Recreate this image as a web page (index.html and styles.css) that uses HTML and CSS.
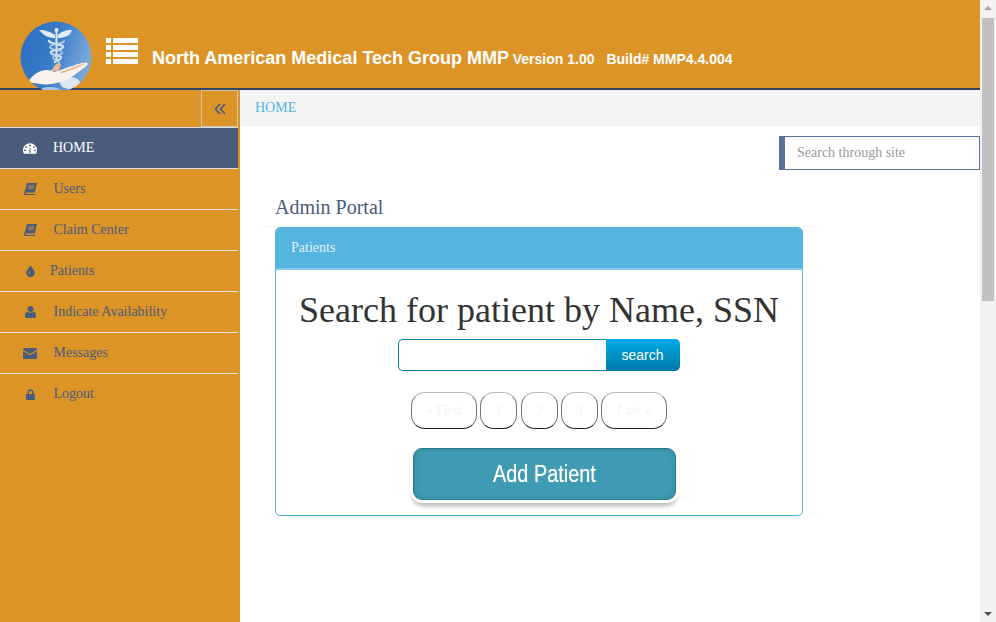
FILE: index.html
```html
<!DOCTYPE html>
<html lang="en">
<head>
<meta charset="utf-8">
<title>North American Medical Tech Group MMP</title>
<link rel="stylesheet" href="styles.css">
</head>
<body>
<div class="viewport">
  <div class="page">
    <header class="topbar">
      <svg class="logo" viewBox="0 0 72 72" aria-hidden="true">
        <defs>
          <linearGradient id="sky" x1="0" y1="0" x2="1" y2="0.3">
            <stop offset="0" stop-color="#2b6cc0"/>
            <stop offset="0.55" stop-color="#3a7cc8"/>
            <stop offset="1" stop-color="#7ba9da"/>
          </linearGradient>
          <clipPath id="disc"><circle cx="36" cy="36" r="35.5"/></clipPath>
        </defs>
        <g clip-path="url(#disc)">
          <g class="logo-art">
            <rect x="-2" y="-2" width="76" height="76" fill="url(#sky)"/>
            <path d="M19 9 C26 9 31 11 35 14 L35 17 C30 17 25 15 23 13 Z M52 9 C45 9 41 11 38 14 L38 17 C43 17 48 15 50 13 Z" fill="#e2ecf6"/>
            <circle cx="36.500" cy="9" r="2" fill="#e2ecf6"/>
            <rect x="35.500" y="10" width="2" height="31" fill="#dfe9f4"/>
            <path d="M29 19 C27 23 44 23 43 26 C42 30 30 28 31 32 C32 35 42 34 41 37 C40 40 34 39 35 42" fill="none" stroke="#d5e3f1" stroke-width="2.200"/>
            <path d="M44 19 C46 23 29 23 30 26 C31 30 43 28 42 32 C41 35 32 34 33 37 C34 40 40 39 39 42" fill="none" stroke="#bcd2e9" stroke-width="1.500"/>
            <ellipse cx="50" cy="62" rx="10" ry="6" fill="#dbe8f4"/>
            <ellipse cx="30" cy="69" rx="10" ry="3" fill="#a9c8e8"/>
            <path d="M8 61 C12 54 19 49 27 49 C30 49 33 50 34 51 C42 49 55 43 65 41.500 C68.500 41 68.500 44 65 46 C58 51 52 57 44 60 C35 63 27 64 20 63 C16 62 11 62 8 61 Z" fill="#f9f1ec"/>
            <path d="M31 50 C33 47 36 42 39 42 C42 42 41 46 38 50 Z" fill="#eab79c"/>
            <path d="M40 51 C47 48.500 56 45 66 42 C60 46 50 50 41 52.500 Z" fill="#e8b79e"/>
          </g>
        </g>
      </svg>
      <svg class="list-icon" viewBox="0 0 32 26" aria-hidden="true">
        <path d="M0 0h5v5H0zM7 0h25v5H7zM0 7h5v5H0zM7 7h25v5H7zM0 14h5v5H0zM7 14h25v5H7zM0 21h5v5H0zM7 21h25v5H7z" fill="#fff"/>
      </svg>
      <h1 class="brand">North American Medical Tech Group MMP <small class="version">Version 1.00</small><small class="build">Build# MMP4.4.004</small></h1>
    </header>
    <div class="columns">
      <aside class="sidebar">
        <div class="toggle-row">
          <button class="toggle" type="button" aria-label="Collapse menu">
            <svg viewBox="0 0 12 12" aria-hidden="true"><path d="M6 1 1.500 6 6 11M11 1 6.500 6 11 11" fill="none" stroke="#4a5b7b" stroke-width="1.700"/></svg>
          </button>
        </div>
        <nav class="menu">
          <a class="item active" href="#">
            <svg class="ico ico-gauge" viewBox="0 0 16 12"><path d="M8 0a8 8 0 0 0-8 8c0 1.500.4 2.900 1.100 4h13.800A8 8 0 0 0 16 8a8 8 0 0 0-8-8ZM8 1.500a1.100 1.100 0 1 1 0 2.200 1.100 1.100 0 0 1 0-2.200ZM3.600 3.300a1.100 1.100 0 1 1 0 2.200 1.100 1.100 0 0 1 0-2.200ZM12.400 3.300a1.100 1.100 0 1 1 0 2.200 1.100 1.100 0 0 1 0-2.200ZM2.200 7a1.100 1.100 0 1 1 0 2.200 1.100 1.100 0 0 1 0-2.200ZM13.800 7a1.100 1.100 0 1 1 0 2.200 1.100 1.100 0 0 1 0-2.200ZM7.300 11 7.500 5h1l.2 6Z" fill="#fff" fill-rule="evenodd"/></svg>
            <span>HOME</span>
          </a>
          <a class="item" href="#">
            <svg class="ico ico-book" viewBox="0 0 13 12.500"><path d="M3.200 0H13l-2.200 9.600H2.400c-.9 0-1 1.400 0 1.400h8.800l-.3 1.500H1.900C.5 12.500-.2 11.300.1 9.900ZM4.500 2.400l-.2 1h6l.2-1ZM4 4.500l-.2 1h6l.2-1Z" fill="#4a5b7b" fill-rule="evenodd"/></svg>
            <span>Users</span>
          </a>
          <a class="item" href="#">
            <svg class="ico ico-book" viewBox="0 0 13 12.500"><path d="M3.200 0H13l-2.200 9.600H2.400c-.9 0-1 1.400 0 1.400h8.800l-.3 1.500H1.900C.5 12.500-.2 11.300.1 9.900ZM4.500 2.400l-.2 1h6l.2-1ZM4 4.500l-.2 1h6l.2-1Z" fill="#4a5b7b" fill-rule="evenodd"/></svg>
            <span>Claim Center</span>
          </a>
          <a class="item tight" href="#">
            <svg class="ico ico-drop" viewBox="0 0 8 11"><path d="M4 0C4.500 2 8 4.500 8 7.200A4 3.800 0 0 1 0 7.200C0 4.500 3.500 2 4 0ZM3.200 5.600C2.200 6.400 2 7.600 2.600 8.600L3.400 8.200C3 7.500 3.200 6.800 3.800 6.200Z" fill="#4a5b7b" fill-rule="evenodd"/></svg>
            <span>Patients</span>
          </a>
          <a class="item" href="#">
            <svg class="ico ico-user" viewBox="0 0 11 12"><circle cx="5.500" cy="3" r="3" fill="#4a5b7b"/><path d="M2 5.500C3 6.800 8 6.800 9 5.500C10.400 6 11 7.500 11 10.200C11 11.300 10.400 12 9.400 12H1.600C.6 12 0 11.300 0 10.200C0 7.500.6 6 2 5.500Z" fill="#4a5b7b"/></svg>
            <span>Indicate Availability</span>
          </a>
          <a class="item" href="#">
            <svg class="ico ico-mail" viewBox="0 0 14 11"><path d="M1 0h12a1 1 0 0 1 1 1v.7L7 6 0 1.700V1a1 1 0 0 1 1-1ZM0 3l7 4.300L14 3v7a1 1 0 0 1-1 1H1a1 1 0 0 1-1-1Z" fill="#4a5b7b"/></svg>
            <span>Messages</span>
          </a>
          <a class="item" href="#">
            <svg class="ico ico-lock" viewBox="0 0 9 11"><path d="M1.500 5V3.200a3 3 0 0 1 6 0V5H9v6H0V5ZM3 5h3V3.200a1.500 1.500 0 0 0-3 0Z" fill="#4a5b7b" fill-rule="evenodd"/></svg>
            <span>Logout</span>
          </a>
        </nav>
      </aside>
      <main class="content">
        <div class="breadcrumb"><a href="#">HOME</a></div>
        <div class="site-search-row">
          <input class="site-search" type="text" placeholder="Search through site">
        </div>
        <section class="portal">
          <h2 class="portal-title">Admin Portal</h2>
          <div class="panel">
            <div class="panel-heading">Patients</div>
            <div class="panel-body">
              <h3 class="search-title">Search for patient by Name, SSN</h3>
              <form class="search-form">
                <input class="search-input" type="text" aria-label="search">
                <button class="search-btn" type="button">search</button>
              </form>
              <div class="pager">
                <a class="page-btn wide" href="#">« First</a>
                <a class="page-btn" href="#">1</a>
                <a class="page-btn" href="#">2</a>
                <a class="page-btn" href="#">3</a>
                <a class="page-btn wide" href="#">Last »</a>
              </div>
              <button class="add-btn" type="button"><span class="add-label">Add Patient</span></button>
            </div>
          </div>
        </section>
      </main>
    </div>
  </div>
  <div class="scrollbar" aria-hidden="true">
    <div class="arrow up"></div>
    <div class="thumb"></div>
    <div class="spacer"></div>
    <div class="arrow down"></div>
  </div>
</div>
</body>
</html>
```
FILE: styles.css
```css
* { box-sizing: border-box; }
html, body { margin: 0; height: 100%; overflow: hidden; }
body { font-family: "Liberation Serif", serif; background: #fff; color: #333; }
a { text-decoration: none; }
.viewport { display: flex; width: 996px; height: 622px; overflow: hidden; }
.page { width: 980px; display: flex; flex-direction: column; }

.topbar {
  height: 90px; flex: none; background: #dd9427; border-bottom: 2px solid #34435e;
  display: flex; align-items: flex-start; padding: 18px 0 0 20px;
}
.logo { width: 72px; height: 72px; flex: none; display: block; margin-top: 3px; }
.logo-art { filter: blur(.4px); }
.list-icon { width: 32px; height: 26px; flex: none; margin: 20px 0 0 14px; }
.brand {
  margin: 29px 0 0 14px; font: bold 18px/22px "Liberation Sans", sans-serif; color: #fff; white-space: nowrap;
}
.version { font-size: 14px; margin-left: -1px; }
.build { font-size: 14px; margin-left: 12px; }

.columns { flex: 1; display: flex; min-height: 0; }
.sidebar { width: 240px; flex: none; background: #dd9427; padding-right: 2px; }
.toggle-row { height: 37px; display: flex; justify-content: flex-end; }
.toggle {
  width: 37px; height: 37px; padding: 0; background: transparent; border: 1px solid #c9c6b8;
  display: flex; align-items: center; justify-content: center;
}
.toggle svg { width: 12px; height: 12px; }
.menu { display: flex; flex-direction: column; border-top: 1px solid #d8dbe0; }
.item {
  height: 41px; display: flex; align-items: center; padding-left: 23px; gap: 16.500px;
  border-bottom: 1px solid #e6e3dc; color: #4a5b7b; font-size: 14px;
}
.item:last-child { border-bottom: 0; padding-bottom: 1px; }
.item.active { color: #fff; background: #4a5b7b; border-bottom-color: #d8dbe0; gap: 16px; }
.item.tight { gap: 15px; padding-left: 26px; }
.ico { flex: none; }
.ico-gauge { width: 14px; height: 11px; }
.ico-book { width: 13px; height: 12.500px; margin-left: 1px; }
.ico-drop { width: 9px; height: 12px; }
.ico-user { width: 11px; height: 12px; margin-left: 2px; margin-right: 1px; }
.ico-mail { width: 14px; height: 11px; }
.ico-lock { width: 9px; height: 11px; margin-left: 3px; margin-right: 2px; }

.content { flex: 1; min-width: 0; background: #fff; }
.breadcrumb { height: 36px; background: #f4f4f4; padding-left: 15px; font-size: 14px; line-height: 36px; }
.breadcrumb a { color: #55b5e0; }
.site-search-row { display: flex; justify-content: flex-end; padding-top: 10px; }
.site-search {
  width: 201px; height: 34px; border: 1px solid #5b7199; border-left-width: 6px; padding: 0 12px;
  font: 14px "Liberation Serif", serif; outline: none; background: #fff;
}
.site-search::placeholder { color: #999; opacity: 1; }
.portal { margin: 24px 0 0 35px; width: 528px; }
.portal-title {
  margin: 0 -14px; padding: 0 14px; height: 33px; font-size: 20px; font-weight: normal; line-height: 27px; color: #4a5b7b;
  border-bottom: 1px solid #f5f5f5; border-radius: 0 0 6px 6px;
}
.panel { border: 1px solid #55b5e0; border-radius: 5px; height: 289px; overflow: hidden; background: #fff; position: relative; }
.panel-heading {
  height: 42px; background: #55b5e0; border-bottom: 2px solid #86cbe9; color: #e3f3fa;
  font-size: 14px; line-height: 40px; padding-left: 15px;
}
.panel-body { display: flex; flex-direction: column; align-items: center; }
.search-title { margin: 20px 0 0; font-size: 36px; font-weight: normal; line-height: 40px; color: #333; white-space: nowrap; }
.search-form { display: flex; width: 282px; height: 32px; margin-top: 9px; margin-left: -1px; }
.search-input {
  width: 208px; height: 32px; border: 1px solid #0780ab; border-right: 0; border-radius: 5px 0 0 5px;
  background: #fff; outline: none; padding: 0 6px;
}
.search-btn {
  width: 74px; height: 32px; border: 0; border-radius: 0 5px 5px 0; color: #fff;
  background: linear-gradient(#00aae8, #0078a5); font: 14px "Liberation Sans", sans-serif;
}
.pager { display: flex; gap: 3.400px; margin-top: 21px; }
.page-btn {
  width: 37px; height: 37px; border-radius: 14px; border: 1px solid; border-color: #bbb #777 #222;
  color: #f4f4f4; font-size: 14px; line-height: 35px; text-align: center; background: #fff;
}
.page-btn.wide { width: 66px; }
.add-btn {
  width: 263px; height: 52px; margin-top: 19px; margin-left: 11px; border: 1px solid #2a7b8c; border-radius: 9px;
  background: #3e9bb3; color: #fff; font: 23px "Liberation Sans", sans-serif;
  box-shadow: inset 0 0 6px rgba(0, 0, 0, .12), 0 0 0 3px #fff, 0 5px 4px 1px rgba(0, 0, 0, .28);
  padding: 0;
}
.add-label { display: inline-block; transform: scaleX(.865); text-shadow: 0 0 1px rgba(255, 255, 255, .6); }

.scrollbar { width: 16px; flex: none; background: #f1f1f1; display: flex; flex-direction: column; align-items: center; }
.arrow { width: 16px; height: 17px; flex: none; position: relative; }
.arrow::after { content: ""; position: absolute; left: 4px; border-left: 4px solid transparent; border-right: 4px solid transparent; }
.arrow.up::after { top: 6px; border-bottom: 4px solid #a3a3a3; }
.arrow.down::after { top: 7px; border-top: 4px solid #505050; }
.thumb { width: 12px; height: 283px; flex: none; margin-top: 1px; background: #c1c1c1; }
.spacer { flex: 1; }
```
